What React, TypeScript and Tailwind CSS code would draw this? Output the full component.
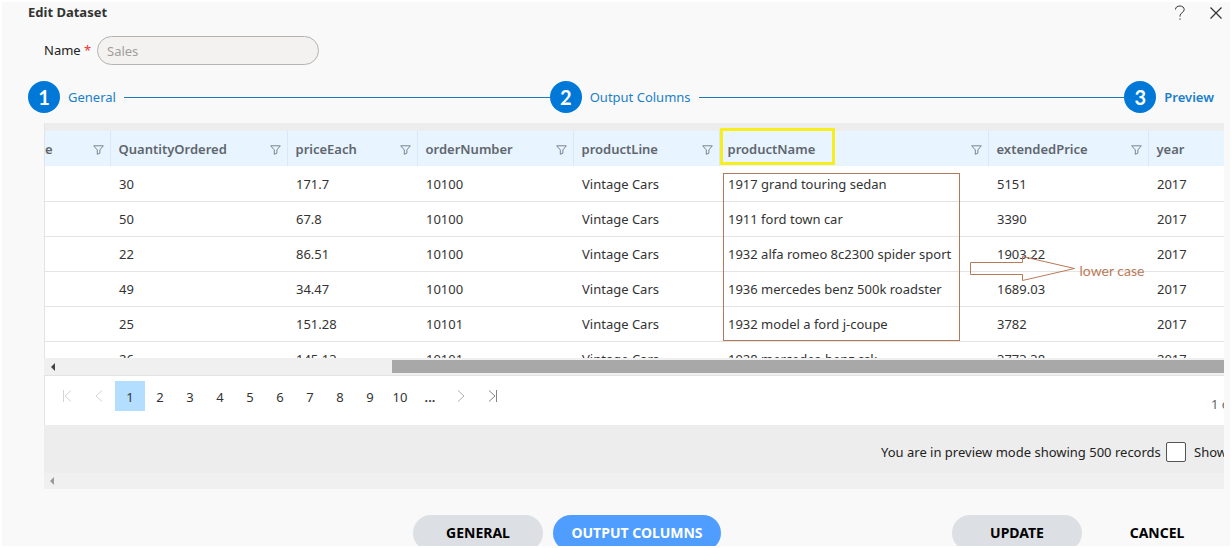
import { useState } from 'react';

const STEPS = ['General', 'Output Columns', 'Preview'];
const ACTIVE_STEP = 2;

const COLUMNS = [
  { name: 'QuantityOrdered', width: 'w-[177px]' },
  { name: 'priceEach', width: 'w-[130px]' },
  { name: 'orderNumber', width: 'w-[156px]' },
  { name: 'productLine', width: 'w-[146px]' },
  { name: 'productName', width: '' },
  { name: 'extendedPrice', width: 'w-[160px]' },
  { name: 'year', width: 'w-[76px]' },
];

const ROWS = [
  ['30', '171.7', '10100', 'Vintage Cars', '1917 grand touring sedan', '5151', '2017'],
  ['50', '67.8', '10100', 'Vintage Cars', '1911 ford town car', '3390', '2017'],
  ['22', '86.51', '10100', 'Vintage Cars', '1932 alfa romeo 8c2300 spider sport', '1903.22', '2017'],
  ['49', '34.47', '10100', 'Vintage Cars', '1936 mercedes benz 500k roadster', '1689.03', '2017'],
  ['25', '151.28', '10101', 'Vintage Cars', '1932 model a ford j-coupe', '3782', '2017'],
  ['26', '145.13', '10101', 'Vintage Cars', '1928 mercedes-benz ssk', '3773.38', '2017'],
];

const PAGES = ['1', '2', '3', '4', '5', '6', '7', '8', '9', '10', '...'];

function FilterButton({ column }: { column: string }) {
  return (
    <button aria-label={`Filter ${column}`} className="shrink-0">
      <svg width="11" height="10" viewBox="0 0 11 10" fill="none" stroke="#6f7881" strokeWidth="0.9">
        <path d="M0.7 0.8H10.3L6.9 4.9V8.2L4.3 9.3V4.9Z" />
      </svg>
    </button>
  );
}

function Stepper() {
  return (
    <ol className="mt-4 flex items-center pl-[26px] pr-4">
      {STEPS.map((step, i) => (
        <li key={step} className="contents">
          <span className="flex h-8 w-8 shrink-0 items-center justify-center rounded-full bg-[#0078d7] font-[Lato,sans-serif] text-xl font-bold text-white">
            {i + 1}
          </span>
          <span
            className={`ml-2 whitespace-nowrap pt-0.5 text-[13px] text-[#1b7fc9] ${
              i === ACTIVE_STEP ? 'font-semibold' : 'mr-2'
            }`}
          >
            {step}
          </span>
          {i < STEPS.length - 1 && <span className="mt-px h-px flex-1 bg-[#1a7ab5]" />}
        </li>
      ))}
    </ol>
  );
}

function DataGrid() {
  return (
    <div className="h-[235px] overflow-hidden border-l border-[#e3e3e3] pt-2">
      <table className="w-full table-fixed border-collapse bg-white text-left text-[13px]">
        <thead>
          <tr className="h-[35px] bg-[#e8f4ff] text-[#5f666d]">
            <th className="w-[65px] pt-0.5 font-semibold">
              <div className="flex items-center justify-between pr-1.5">
                e
                <FilterButton column="date" />
              </div>
            </th>
            {COLUMNS.map(({ name, width }) => (
              <th
                key={name}
                className={`relative border-l border-[#d9e8f4] pl-2 pt-0.5 font-semibold ${width}`}
              >
                <div className="flex items-center justify-between pr-1.5">
                  {name}
                  {name !== 'year' && <FilterButton column={name} />}
                </div>
                {name === 'productName' && (
                  <>
                    <div className="absolute left-0 top-[-3px] h-[37px] w-[115px] border-3 border-[#f7ee1d]" />
                    <div className="absolute left-[3px] top-[42px] h-[168px] w-[237px] border border-[#b17a5e]" />
                  </>
                )}
                {name === 'extendedPrice' && (
                  <div className="absolute left-[-19px] top-[124px] flex items-center gap-1 font-[Lato,sans-serif] text-sm font-normal text-[#b97a57]">
                    <svg width="106" height="26" viewBox="0 0 106 26" fill="none" stroke="currentColor">
                      <path d="M0.5 7.5H52.5V1.5L104.5 13.5L52.5 25.5V19.5H0.5Z" />
                    </svg>
                    <span className="whitespace-nowrap pt-1.5">lower case</span>
                  </div>
                )}
              </th>
            ))}
          </tr>
        </thead>
        <tbody className="text-[#333]">
          {ROWS.map((row, r) => (
            <tr key={r} className="h-[35px] border-b border-[#e4e4e4]">
              <td />
              {row.map((value, c) => (
                <td key={c} className="whitespace-nowrap pl-[9px] pt-0.5">
                  {value}
                </td>
              ))}
            </tr>
          ))}
        </tbody>
      </table>
    </div>
  );
}

function Pager() {
  const [page, setPage] = useState('1');

  return (
    <div className="flex h-[50px] items-start border-l border-t border-[#e3e3e3] bg-white pl-1.5 pt-[5px] text-[13px] text-[#333]">
      <button aria-label="First page" className="flex h-[30px] w-8 items-center justify-center text-[#d4d4d4]">
        <svg width="10" height="12" viewBox="0 0 10 12" fill="none" stroke="currentColor">
          <path d="M1.5 0V12M9 0.5L3 6L9 11.5" />
        </svg>
      </button>
      <button aria-label="Previous page" className="flex h-[30px] w-8 items-center justify-center text-[#d4d4d4]">
        <svg width="8" height="12" viewBox="0 0 8 12" fill="none" stroke="currentColor">
          <path d="M7 0.5L1 6L7 11.5" />
        </svg>
      </button>
      {PAGES.map((p) => (
        <button
          key={p}
          onClick={() => setPage(p)}
          className={`h-[30px] w-[30px] pt-1 ${p === page ? 'bg-[#b3deff]' : ''} ${
            p === '...' ? 'font-semibold' : ''
          }`}
        >
          {p}
        </button>
      ))}
      <button aria-label="Next page" className="flex h-[30px] w-8 items-center justify-center text-[#999]">
        <svg width="8" height="12" viewBox="0 0 8 12" fill="none" stroke="currentColor" strokeWidth="0.8">
          <path d="M1 0.5L7 6L1 11.5" />
        </svg>
      </button>
      <button aria-label="Last page" className="flex h-[30px] w-8 items-center justify-center text-[#777]">
        <svg width="10" height="12" viewBox="0 0 10 12" fill="none" stroke="currentColor" strokeWidth="0.9">
          <path d="M8.5 0V12M1 0.5L7 6L1 11.5" />
        </svg>
      </button>
      <span className="ml-auto mt-[14px] w-[13px] overflow-hidden whitespace-nowrap text-[#666]">
        1 of 50
      </span>
    </div>
  );
}

export default function App() {
  return (
    <div className="h-screen overflow-hidden bg-white p-0.5 font-['Noto_Sans',sans-serif]">
      <div className="h-full overflow-hidden bg-[#f9f9f9]">
        <header className="flex h-[22px] items-center justify-between pl-[26px] pr-2">
          <h1 className="text-[13px] font-bold text-[#333]">Edit Dataset</h1>
          <div className="flex items-center gap-6 text-[#333]">
            <button aria-label="Help">
              <svg width="12" height="16" viewBox="0 0 12 16" fill="none" stroke="currentColor">
                <path d="M1.5 4.5C1.5 2.2 3.4 1 5.8 1C8.4 1 10.2 2.4 10.2 4.6C10.2 7.6 6 7.8 6 10.8V11.6" />
                <path d="M6 13.4V14.8" />
              </svg>
            </button>
            <button aria-label="Close">
              <svg width="12" height="12" viewBox="0 0 12 12" fill="none" stroke="currentColor" strokeWidth="1.2">
                <path d="M0.5 0.5L11.5 11.5M11.5 0.5L0.5 11.5" />
              </svg>
            </button>
          </div>
        </header>

        <div className="mt-3 flex items-center pl-[42px] text-[13px]">
          <label htmlFor="dataset-name" className="w-[53px] whitespace-nowrap text-[#222]">
            Name <span className="text-[#e33]">*</span>
          </label>
          <input
            id="dataset-name"
            defaultValue="Sales"
            disabled
            className="h-[29px] w-[222px] rounded-full border border-[#b5b3b1] bg-[#f3f2f1] px-[9px] text-[#a09e9c]"
          />
        </div>

        <Stepper />

        <section className="ml-[42px] mr-1.5 mt-2.5 bg-[#ededed]">
          <DataGrid />
          <div className="flex h-[17px] items-center bg-[#f0f0f0] pl-[7px]">
            <svg width="4" height="8" viewBox="0 0 4 8" fill="#444">
              <path d="M4 0V8L0 4Z" />
            </svg>
            <div className="ml-auto h-[13px] w-[832px] bg-[#a8a8a8]" />
          </div>
          <Pager />
          <div className="ml-auto flex h-[48px] w-[343px] items-center overflow-hidden whitespace-nowrap pt-1.5 text-[13px] text-[#222]">
            <span className="w-[285px] shrink-0 pt-0.5">You are in preview mode showing 500 records</span>
            <input
              id="show-all"
              type="checkbox"
              className="h-5 w-5 shrink-0 appearance-none rounded-xs border border-[#555] bg-white"
            />
            <label htmlFor="show-all" className="pl-2 pt-0.5">
              Show
            </label>
          </div>
          <div className="flex h-4 items-center bg-[#f0f0f0] pl-1.5">
            <svg width="4" height="8" viewBox="0 0 4 8" fill="#999">
              <path d="M4 0V8L0 4Z" />
            </svg>
          </div>
        </section>

        <footer className="mt-[26px] flex justify-end gap-[231px] pr-2 text-sm font-bold text-black">
          <div className="flex gap-2.5">
            <button className="h-9 w-[130px] rounded-full bg-[#dcdfe3]">GENERAL</button>
            <button className="h-9 w-[168px] rounded-full bg-[#4f9dff] text-white">OUTPUT COLUMNS</button>
          </div>
          <div className="flex gap-2.5">
            <button className="h-9 w-[130px] rounded-full bg-[#dcdfe3]">UPDATE</button>
            <button className="h-9 w-[130px] rounded-full">CANCEL</button>
          </div>
        </footer>
      </div>
    </div>
  );
}
